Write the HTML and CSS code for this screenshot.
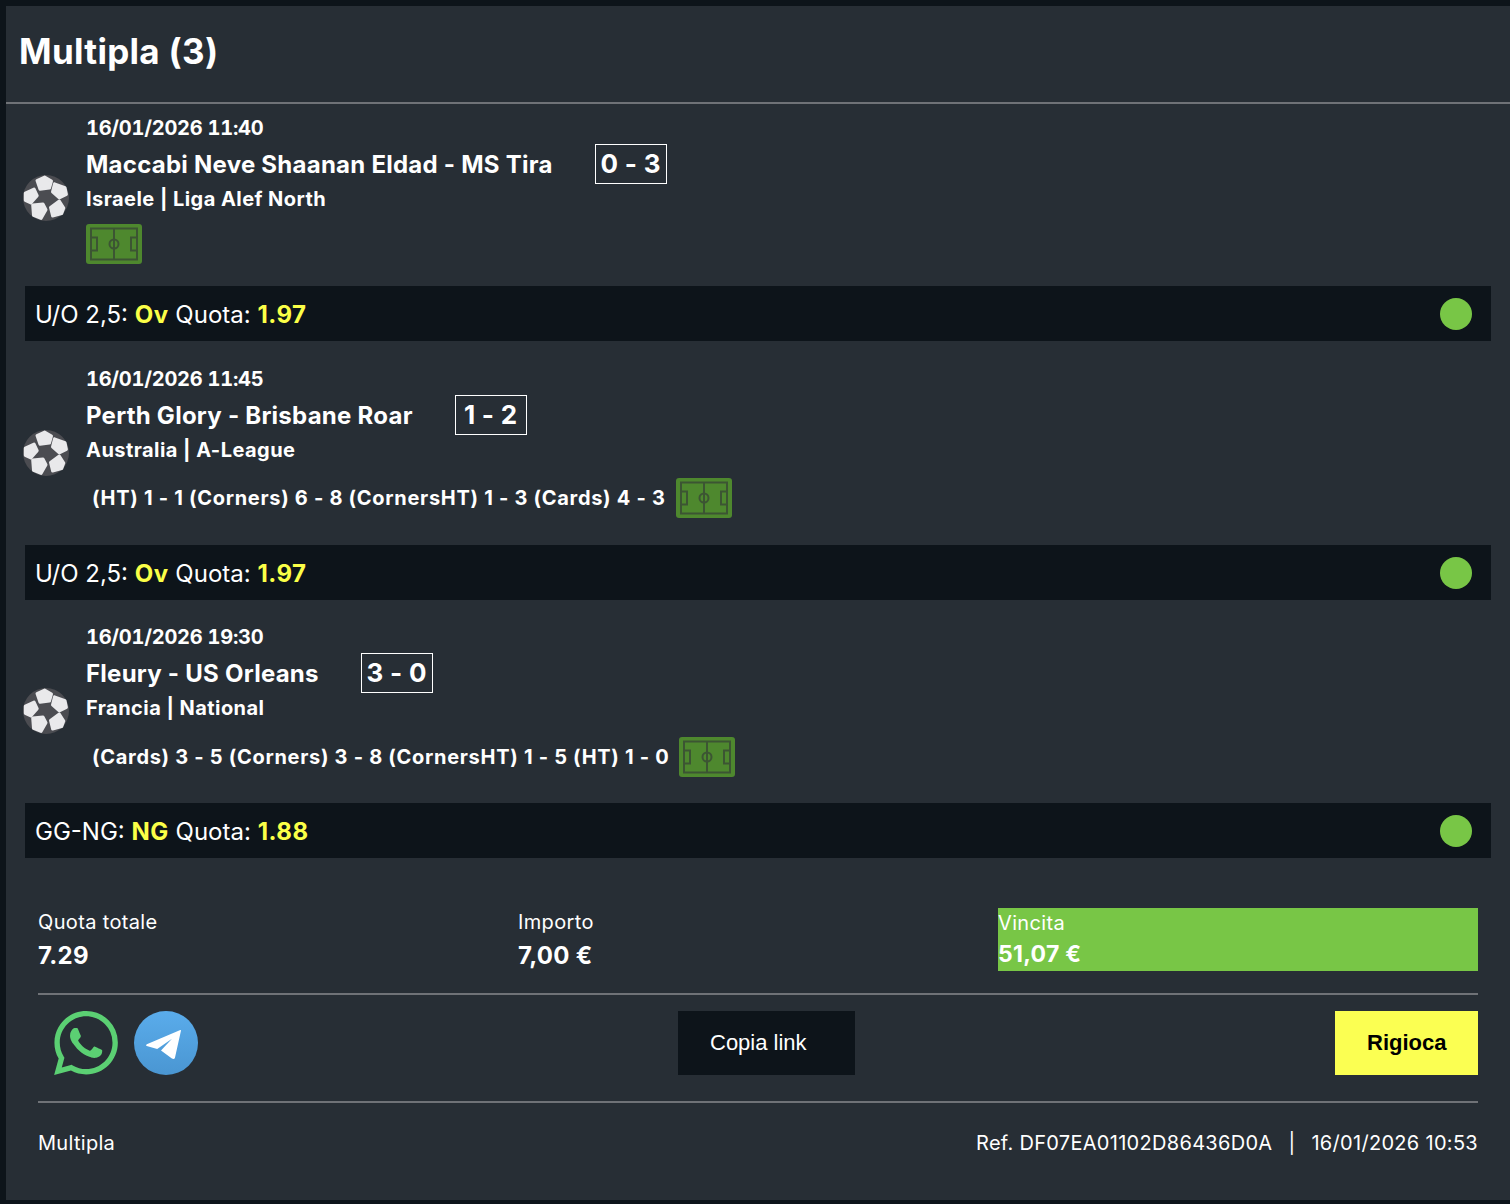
FILE: index.html
```html
<!DOCTYPE html>
<html lang="it">
<head>
    <meta charset="UTF-8">
    <title>Multipla (3)</title>
    <link rel="stylesheet" href="styles.css">
</head>
<body>
    <svg class="sprites" width="0" height="0">
        <symbol id="ball" viewBox="0 0 46 46">
            <circle cx="23" cy="23" r="23" fill="#4b4c51"/>
            <g fill="#e9e9eb" stroke="#e9e9eb" stroke-width="3" stroke-linejoin="round">
                <polygon points="14,5.5 21.6,2 28.5,6 26.5,13 17,14.2"/>
                <polygon points="31.5,8.8 42,12.6 43.4,19.4 36.3,23 29.5,16.8"/>
                <polygon points="27.5,32.4 36.3,26 40.8,33 38.7,38.6 29.6,41"/>
                <polygon points="9.7,30 20,29 23,34.7 18,43.4 10.5,40.4"/>
                <polygon points="2.3,18 11,14 14.2,20.7 7.8,28 2.3,25.3"/>
            </g>
        </symbol>
        <symbol id="pitch" viewBox="0 0 56 40">
            <rect width="56" height="40" rx="3" fill="#4e882e"/>
            <g fill="none" stroke="#3c5533" stroke-width="2">
                <rect x="5" y="4.5" width="46" height="31"/>
                <line x1="28" y1="4.5" x2="28" y2="35.5"/>
                <circle cx="28" cy="20" r="4.5"/>
                <rect x="5" y="13.5" width="6" height="13"/>
                <rect x="45" y="13.5" width="6" height="13"/>
            </g>
        </symbol>
    </svg>

    <div class="panel">
        <h1 class="title">Multipla (3)</h1>

        <div class="match match-first">
            <svg class="ball"><use href="#ball"/></svg>
            <div class="match-info">
                <div class="date">16/01/2026 11:40</div>
                <div class="teams">
                    <span class="teams-name">Maccabi Neve Shaanan Eldad - MS Tira</span>
                    <span class="score">0 - 3</span>
                </div>
                <div class="league">Israele | Liga Alef North</div>
                <div class="details">
                    <svg class="pitch"><use href="#pitch"/></svg>
                </div>
            </div>
        </div>
        <div class="market">
            <span>U/O 2,5: <b>Ov</b> Quota: <b>1.97</b></span>
            <span class="dot"></span>
        </div>

        <div class="match">
            <svg class="ball"><use href="#ball"/></svg>
            <div class="match-info">
                <div class="date">16/01/2026 11:45</div>
                <div class="teams">
                    <span class="teams-name">Perth Glory - Brisbane Roar</span>
                    <span class="score">1 - 2</span>
                </div>
                <div class="league">Australia | A-League</div>
                <div class="details">
                    <span class="details-text">(HT) 1 - 1 (Corners) 6 - 8 (CornersHT) 1 - 3 (Cards) 4 - 3</span>
                    <svg class="pitch"><use href="#pitch"/></svg>
                </div>
            </div>
        </div>
        <div class="market">
            <span>U/O 2,5: <b>Ov</b> Quota: <b>1.97</b></span>
            <span class="dot"></span>
        </div>

        <div class="match match-last">
            <svg class="ball"><use href="#ball"/></svg>
            <div class="match-info">
                <div class="date">16/01/2026 19:30</div>
                <div class="teams">
                    <span class="teams-name">Fleury - US Orleans</span>
                    <span class="score">3 - 0</span>
                </div>
                <div class="league">Francia | National</div>
                <div class="details">
                    <span class="details-text">(Cards) 3 - 5 (Corners) 3 - 8 (CornersHT) 1 - 5 (HT) 1 - 0</span>
                    <svg class="pitch"><use href="#pitch"/></svg>
                </div>
            </div>
        </div>
        <div class="market">
            <span>GG-NG: <b>NG</b> Quota: <b>1.88</b></span>
            <span class="dot"></span>
        </div>

        <div class="summary">
            <div class="summary-item">
                <div class="summary-label">Quota totale</div>
                <div class="summary-value">7.29</div>
            </div>
            <div class="summary-item">
                <div class="summary-label">Importo</div>
                <div class="summary-value">7,00 €</div>
            </div>
            <div class="summary-item win">
                <div class="summary-label">Vincita</div>
                <div class="summary-value">51,07 €</div>
            </div>
        </div>

        <div class="actions">
            <div class="share">
                <svg class="share-icon" viewBox="0 0 24 24"><path fill="#5bd073" d="M17.472 14.382c-.297-.149-1.758-.867-2.03-.967-.273-.099-.471-.148-.67.15-.197.297-.767.966-.94 1.164-.173.199-.347.223-.644.075-.297-.15-1.255-.463-2.39-1.475-.883-.788-1.48-1.761-1.653-2.059-.173-.297-.018-.458.13-.606.134-.133.298-.347.446-.52.149-.174.198-.298.298-.497.099-.198.05-.371-.025-.52-.075-.149-.669-1.612-.916-2.207-.242-.579-.487-.5-.669-.51-.173-.008-.371-.01-.57-.01-.198 0-.52.074-.792.372-.272.297-1.04 1.016-1.04 2.479 0 1.462 1.065 2.875 1.213 3.074.149.198 2.096 3.2 5.077 4.487.709.306 1.262.489 1.694.625.712.227 1.36.195 1.871.118.571-.085 1.758-.719 2.006-1.413.248-.694.248-1.289.173-1.413-.074-.124-.272-.198-.57-.347m-5.421 7.403h-.004a9.87 9.87 0 01-5.031-1.378l-.361-.214-3.741.982.998-3.648-.235-.374a9.86 9.86 0 01-1.51-5.26c.001-5.45 4.436-9.884 9.888-9.884 2.64 0 5.122 1.03 6.988 2.898a9.825 9.825 0 012.893 6.994c-.003 5.45-4.437 9.884-9.885 9.884m8.413-18.297A11.815 11.815 0 0012.05 0C5.495 0 .16 5.335.157 11.892c0 2.096.547 4.142 1.588 5.945L.057 24l6.305-1.654a11.882 11.882 0 005.683 1.448h.005c6.554 0 11.89-5.335 11.893-11.893a11.821 11.821 0 00-3.48-8.413z"/></svg>
                <svg class="share-icon" viewBox="0 0 64 64">
                    <defs>
                        <linearGradient id="tg" x1="0" y1="0" x2="0" y2="1">
                            <stop offset="0" stop-color="#5aaceb"/>
                            <stop offset="1" stop-color="#4a96d2"/>
                        </linearGradient>
                    </defs>
                    <circle cx="32" cy="32" r="32" fill="url(#tg)"/>
                    <path fill="#fff" d="M46.3 19 12.8 33.2q-1.6 1-.1 1.9L23.2 38 38 27.8 27 39.6l10.9 8q2.2 1.2 3-.7l6-27q.3-1.2-.6-.9z"/>
                </svg>
            </div>
            <button class="btn btn-dark">Copia link</button>
            <button class="btn btn-yellow">Rigioca</button>
        </div>

        <div class="footer">
            <span>Multipla</span>
            <span>Ref. DF07EA01102D86436D0A<span class="sep">|</span>16/01/2026 10:53</span>
        </div>
    </div>
</body>
</html>
```
FILE: styles.css
```css
body {
    font-family: 'Inter', 'Liberation Sans', sans-serif;
    margin: 0;
    padding: 6px 0 4px 6px;
    background-color: #0d141a;
    color: #fff;
}
.sprites {
    position: absolute;
}
.panel {
    background-color: #272e35;
    height: 1194px;
    box-sizing: border-box;
}
.title {
    margin: 0;
    height: 98px;
    padding-left: 13px;
    box-sizing: border-box;
    border-bottom: 2px solid #6f7277;
    font-size: 35px;
    font-weight: 700;
    line-height: 90px;
    letter-spacing: 0.3px;
}

/* Matches */
.match {
    display: flex;
    align-items: flex-start;
    padding: 26px 0 27px 17px;
}
.match-first {
    padding-top: 12px;
    padding-bottom: 22px;
}
.match-last {
    padding-top: 25px;
    padding-bottom: 26px;
}
.ball {
    width: 46px;
    height: 46px;
    margin: 63px 17px 0 0;
    flex-shrink: 0;
}
.match-first .ball {
    margin-top: 59px;
}
.date {
    font-size: 20px;
    font-weight: 700;
    font-variant-numeric: tabular-nums;
    line-height: 24px;
    letter-spacing: -0.25px;
}
.league {
    font-size: 20px;
    font-weight: 700;
    line-height: 24px;
    letter-spacing: 0.45px;
}
.teams {
    display: flex;
    align-items: center;
    margin: 4px 0 3px;
}
.teams-name {
    font-size: 24px;
    font-weight: 700;
    letter-spacing: 0.25px;
}
.score {
    margin-left: 42px;
    width: 72px;
    height: 40px;
    box-sizing: border-box;
    border: 1px solid #fff;
    font-size: 26px;
    font-weight: 700;
    line-height: 38px;
    text-align: center;
    letter-spacing: 0.3px;
}
.details {
    display: flex;
    align-items: center;
    gap: 10px;
    margin-top: 16px;
}
.match-first .details {
    margin-top: 13px;
}
.match-last .details {
    margin-top: 17px;
}
.details-text {
    padding-left: 6px;
    font-size: 20px;
    font-weight: 700;
    letter-spacing: 0.7px;
}
.pitch {
    width: 56px;
    height: 40px;
}

/* Market row */
.market {
    display: flex;
    align-items: center;
    justify-content: space-between;
    height: 55px;
    box-sizing: border-box;
    margin: 0 19px;
    padding: 2px 19px 0 10px;
    background-color: #0d141a;
    font-size: 24px;
}
.market b {
    color: #fbff47;
    font-weight: 700;
    letter-spacing: 0.5px;
}
.dot {
    width: 32px;
    height: 32px;
    margin-top: -2px;
    border-radius: 50%;
    background-color: #78c646;
}

/* Totals */
.summary {
    display: grid;
    grid-template-columns: repeat(3, 1fr);
    margin: 50px 32px 0;
    padding-bottom: 22px;
    border-bottom: 2px solid #6f7277;
}
.summary-item {
    display: flex;
    flex-direction: column;
    gap: 6px;
    height: 63px;
}
.summary-label {
    font-size: 20px;
    line-height: 28px;
    letter-spacing: 0.35px;
}
.summary-value {
    font-size: 24px;
    font-weight: 700;
    line-height: 28px;
    letter-spacing: 0.3px;
}
.win {
    padding-top: 1px;
    gap: 3px;
    box-sizing: border-box;
    background-color: #78c646;
}
.win .summary-value {
    font-size: 23px;
}

/* Actions */
.actions {
    display: flex;
    justify-content: space-between;
    margin: 0 32px;
    padding: 16px 0 26px 16px;
    border-bottom: 2px solid #6f7277;
}
.share {
    display: flex;
    gap: 16px;
}
.share-icon {
    width: 64px;
    height: 64px;
}
.btn {
    height: 64px;
    padding: 0 32px;
    border: none;
    font-family: 'Liberation Sans', sans-serif;
    font-size: 22px;
    text-align: left;
}
.btn-dark {
    width: 177px;
    background-color: #0d141a;
    color: #fff;
}
.btn-yellow {
    width: 143px;
    background-color: #fbff52;
    color: #000;
    font-weight: 700;
}

/* Footer */
.footer {
    display: flex;
    justify-content: space-between;
    margin: 26px 32px 0;
    font-size: 20px;
    line-height: 28px;
    letter-spacing: 0.3px;
}
.sep {
    padding: 0 16px;
}
```
